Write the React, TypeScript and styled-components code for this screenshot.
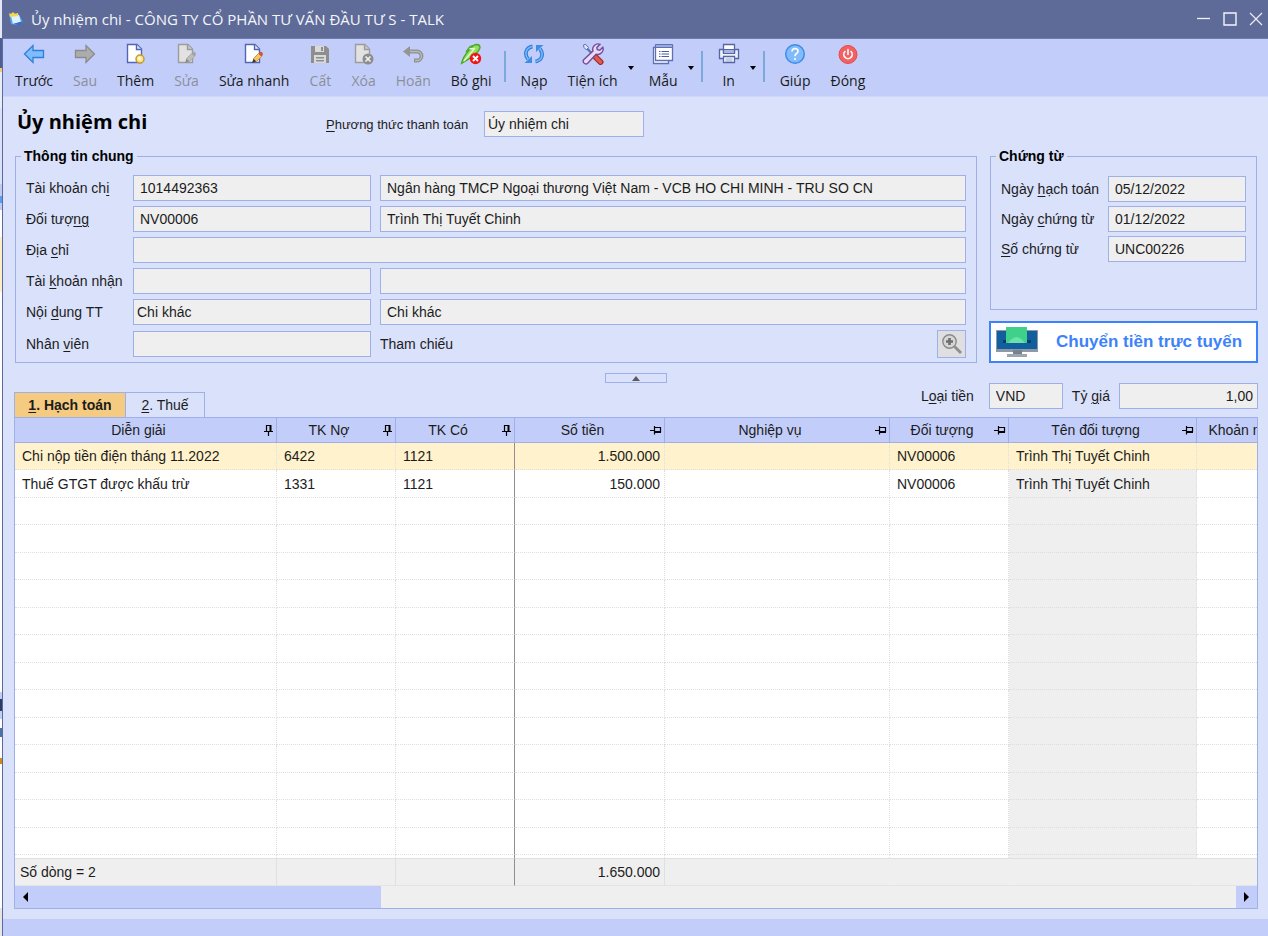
import React from "react";
import styled, { createGlobalStyle, css } from "styled-components";

const c = {
  title: "#5e6b98",
  bar: "#c2cef9",
  body: "#dae1fb",
  line: "#9fb0e8",
  field: "#efefef",
  blue: "#3c82fb",
};

const uiFont = `"Open Sans", "Noto Sans", sans-serif`;
const formFont = `"Liberation Sans", Arial, sans-serif`;

const GlobalStyle = createGlobalStyle`
  *, *::before, *::after { box-sizing: border-box; }
  body { margin: 0; background: ${c.body}; font: 14px/18px ${formFont}; color: #1c1c1c; }
  button, input { font: inherit; color: inherit; }
  u { text-decoration-thickness: 1px; text-underline-offset: 2px; }
`;

/* ---------- window frame ---------- */

const Desktop = styled.div`
  display: flex;
  min-height: 100vh;
`;

const Behind = styled.div`
  flex: none;
  width: 3px;
  border-right: 1px solid #5d6a9c;
  background: linear-gradient(
    #e3e8f6 0 38px, #4f5d90 38px 68px, #f3c77c 68px 72px, #e9edf8 72px 108px,
    #dbe2f8 108px 184px, #c0cbf0 184px 196px, #5b9cf0 196px 203px, #c0cbf0 203px 210px,
    #fff 210px 237px, #fdf0c6 237px 292px, #fff 292px 692px, #c0cdf6 692px 699px,
    #2c3a66 699px 711px, #c0cdf6 711px 719px, #fff 719px 728px, #4a74a8 728px 737px,
    #fff 737px 758px, #d08a1c 758px 764px, #fff 764px 908px, #e6e6e6 908px
  );
`;

const Window = styled.div`
  flex: 1;
  min-width: 0;
  display: flex;
  flex-direction: column;
  background: ${c.body};
`;

const TitleBar = styled.header`
  display: flex;
  align-items: center;
  gap: 7px;
  height: 39px;
  padding: 0 5px;
  background: ${c.title};
  border-bottom: 1px solid #6f7cb0;
  color: #f4f5fa;
  font: 15px/20px ${uiFont};
`;

const TitleText = styled.span`
  flex: 1;
`;

const CaptionButtons = styled.div`
  display: flex;
  gap: 12px;
`;

const PlainButton = styled.button`
  display: flex;
  padding: 0;
  border: 0;
  background: none;
`;

/* ---------- toolbar ---------- */

const ToolBar = styled.nav`
  display: flex;
  height: 58px;
  padding-left: 2px;
  background: ${c.bar};
  border-bottom: 1px solid #cfd8fb;
`;

const Tool = styled.button`
  display: flex;
  flex-direction: column;
  align-items: center;
  gap: 6px;
  padding: 4px 10px 0;
  border: 0;
  background: none;
  color: #1a1a1a;
  font: 14px/20px ${uiFont};
  white-space: nowrap;
  &:disabled { color: #8b8e99; }
`;

const Caret = styled.button`
  width: 11px;
  padding: 0;
  border: 0;
  background: none;
  &::before {
    content: "";
    display: block;
    width: 6px;
    border: 3px solid transparent;
    border-top: 4px solid #000;
    border-bottom: 0;
  }
`;

const ToolDivider = styled.span`
  width: 2px;
  height: 31px;
  margin: 12px 5px 0 2px;
  background: #7ca9dc;
`;

/* ---------- form ---------- */

const Content = styled.main`
  flex: 1;
  display: flex;
  flex-direction: column;
  padding: 14px 10px 10px 11px;
`;

const HeadRow = styled.div`
  display: flex;
  align-items: flex-start;
`;

const Heading = styled.h1`
  width: 312px;
  margin: 0;
  padding: 0 3px;
  font: bold 20px/22px ${uiFont};
  color: #000;
`;

const HeadLabel = styled.label`
  width: 158px;
  font-size: 13px;
  line-height: 28px;
`;

const Field = styled.input<{ $snug?: boolean; $end?: boolean; $w?: number }>`
  ${(p) => (p.$w ? css`width: ${p.$w}px;` : css`width: 100%; min-width: 0;`)}
  height: 26px;
  padding: 0 ${(p) => (p.$end ? 4 : 6)}px 0 ${(p) => (p.$snug ? 3 : 6)}px;
  border: 1px solid ${c.line};
  border-radius: 0;
  background: ${c.field};
  text-align: ${(p) => (p.$end ? "right" : "left")};
`;

const Panels = styled.div`
  display: grid;
  grid-template-columns: 1fr 269px;
  gap: 12px;
  margin-top: 9px;
`;

const Side = styled.div`
  display: flex;
  flex-direction: column;
  justify-content: space-between;
`;

const Group = styled.fieldset`
  min-width: 0;
  margin: 0 0 0 1px;
  padding: 11px 10px 5px;
  border: 1px solid ${c.line};
`;

const SideGroup = styled(Group)`
  margin: 0 1px;
  padding-top: 12px;
  padding-bottom: 47px;
`;

const Legend = styled.legend`
  margin-left: -5px;
  padding: 0 3px;
  font-weight: bold;
  line-height: 16px;
  color: #000;
`;

const InfoGrid = styled.div`
  display: grid;
  grid-template-columns: 98px 238px 1fr;
  gap: 5px 9px;
  align-items: center;
  label { white-space: nowrap; }
`;

const Wide = styled.div`
  grid-column: 2 / 4;
`;

const RefCell = styled.div`
  display: flex;
  align-items: center;
  justify-content: space-between;
  height: 27px;
`;

const LookupButton = styled.button`
  display: grid;
  place-items: center;
  width: 29px;
  height: 28px;
  padding: 0;
  border: 1px solid ${c.line};
  background: #dfdfe1;
`;

const DocGrid = styled.div`
  display: grid;
  grid-template-columns: 98px 1fr;
  gap: 4px 9px;
  align-items: center;
  label { white-space: nowrap; }
`;

const TransferButton = styled.button`
  display: flex;
  align-items: center;
  gap: 18px;
  height: 42px;
  padding: 0 5px;
  border: 2px solid ${c.blue};
  background: #fff;
  color: ${c.blue};
  font-weight: bold;
  font-size: 17px;
  white-space: nowrap;
  svg { flex: none; }
`;

const Collapse = styled.button`
  display: grid;
  place-items: center;
  align-self: center;
  width: 62px;
  height: 10px;
  margin-top: 10px;
  padding: 0;
  border: 1px solid ${c.line};
  background: none;
  &::before {
    content: "";
    border: 4px solid transparent;
    border-bottom: 5px solid #5b5b5b;
    border-top: 0;
  }
`;

/* ---------- detail grid ---------- */

const TabRow = styled.div`
  display: flex;
  align-items: flex-end;
  height: 34px;
`;

const Tab = styled.button<{ $active?: boolean }>`
  width: ${(p) => (p.$active ? 112 : 79)}px;
  height: 25px;
  padding: 0;
  border: 1px solid ${c.line};
  border-bottom: 0;
  border-left-width: ${(p) => (p.$active ? 1 : 0)}px;
  background: ${(p) => (p.$active ? "#f5cb81" : "none")};
  font-weight: ${(p) => (p.$active ? "bold" : "normal")};
`;

const Currency = styled.div`
  display: flex;
  align-items: center;
  gap: 9px;
  margin-left: auto;
  align-self: flex-start;
  white-space: nowrap;
  label:first-child { margin-right: 6px; }
`;

const GridPanel = styled.section`
  flex: 1;
  display: flex;
  flex-direction: column;
  min-width: 0;
  border: 1px solid ${c.line};
  background: #fff;
`;

const GridScroll = styled.div`
  flex: 1;
  overflow: hidden;
  display: grid;
`;

const Table = styled.table`
  width: 1314px;
  table-layout: fixed;
  border-collapse: separate;
  border-spacing: 0;
`;

const Th = styled.th`
  height: 25px;
  padding: 0;
  border-right: 1px solid ${c.line};
  border-bottom: 1px solid ${c.line};
  background: ${c.bar};
  font-weight: normal;
`;

const ThInner = styled.div`
  display: flex;
  align-items: center;
  padding-right: 2px;
  span { flex: 1; text-align: center; white-space: nowrap; }
`;

const Tr = styled.tr<{ $selected?: boolean }>`
  height: 27px;
  background: ${(p) => (p.$selected ? "#fff2cc" : "#fff")};
  &:nth-child(even) { height: 28px; }
  &:last-child { height: 3px; }
  &:last-child td { border-bottom: 0; }
`;

const Td = styled.td<{ $num?: boolean; $frozen?: boolean; $grey?: boolean }>`
  padding: 0 ${(p) => (p.$num ? 4 : 6)}px 0 7px;
  border-bottom: 1px dotted #dedede;
  border-right: 1px ${(p) => (p.$frozen ? "solid #8f8f8f" : "dotted #dedede")};
  text-align: ${(p) => (p.$num ? "right" : "left")};
  white-space: nowrap;
  ${(p) => p.$grey && css`background: #efefef;`}
`;

const FootTd = styled.td<{ $num?: boolean; $frozen?: boolean; $open?: boolean }>`
  height: 28px;
  padding: 0 4px 0 5px;
  background: ${c.field};
  border-top: 1px solid #e0e0e0;
  border-bottom: 1px solid #e4e4e4;
  border-right: 1px solid ${(p) => (p.$frozen ? "#8f8f8f" : p.$open ? c.field : "#e0e0e0")};
  text-align: ${(p) => (p.$num ? "right" : "left")};
`;

const ScrollBar = styled.div`
  display: flex;
  justify-content: space-between;
  height: 22px;
  background: ${c.field};
`;

const Thumb = styled.div`
  display: flex;
  width: 366px;
  background: ${c.bar};
`;

const Arrow = styled.button<{ $right?: boolean }>`
  display: grid;
  place-items: center;
  width: 21px;
  padding: 0;
  border: 0;
  background: ${c.bar};
  &::before {
    content: "";
    border: 5px solid transparent;
    ${(p) =>
      p.$right
        ? css`border-left-color: #000; border-right: 0;`
        : css`border-right-color: #000; border-left: 0;`}
  }
`;

const StatusBar = styled.footer`
  height: 17px;
  background: ${c.bar};
`;

/* ---------- icons ---------- */

const Svg = ({ w = 22, h = 22, children }: { w?: number; h?: number; children: React.ReactNode }) => (
  <svg width={w} height={h} viewBox={`0 0 ${w} ${h}`} fill="none" aria-hidden="true">
    {children}
  </svg>
);

const ArrowIcon = ({ right, fill, stroke }: { right?: boolean; fill: string; stroke: string }) => (
  <Svg>
    <path
      d={right ? "M20.500 11 12 2.500v5H1.500v7H12v5z" : "M1.500 11 10 2.500v5h10.500v7H10v5z"}
      fill={fill}
      stroke={stroke}
      strokeWidth="1.300"
    />
  </Svg>
);

const Page = ({ grey }: { grey?: boolean }) => (
  <>
    <path d="M2.500 1.500h9.500l4.500 4.500v13.500h-14z" fill={grey ? "#e2e2e2" : "#fff"} stroke={grey ? "#9c9c9c" : "#5166b4"} strokeWidth="1.400" />
    <path d="M11.500 1.500v5h5" fill={grey ? "#c9c9c9" : "#dfe5fa"} stroke={grey ? "#9c9c9c" : "#5166b4"} strokeWidth="1.400" />
  </>
);

const AddIcon = () => (
  <Svg>
    <Page />
    <circle cx="15" cy="16" r="4" fill="#fbe58a" stroke="#c89a2c" strokeWidth="1.500" />
    <circle cx="14.500" cy="15.500" r="1.700" fill="#fff8d2" />
  </Svg>
);

const EditIcon = ({ grey }: { grey?: boolean }) => (
  <Svg>
    <Page grey={grey} />
    <path d="m9 20 1.500-4.500 3 3z" fill={grey ? "#8c8c8c" : "#3f3a3a"} />
    <path d="m10.500 15.500 5-5 3 3-5 5z" fill={grey ? "#bdbdbd" : "#f3c75a"} stroke={grey ? "#a3a3a3" : "#c08830"} strokeWidth=".8" />
    <path d="m15.500 10.500 1.300-1.300q1.500-.8 2.500.3t.5 2.500L18.500 13.500z" fill={grey ? "#a5a5a5" : "#d9503e"} />
  </Svg>
);

const SaveIcon = () => (
  <Svg>
    <path d="M2 3h15l3 3v14H2z" fill="#8e8e8e" />
    <path d="M6 3h9v6H6zM5 12h12v8H5z" fill="#dadada" />
    <path d="M12 4h2v4h-2zM7 14h8v1.500H7zM7 17h8v1.500H7z" fill="#8e8e8e" />
  </Svg>
);

const DeleteIcon = () => (
  <Svg>
    <Page grey />
    <circle cx="15" cy="16" r="5.500" fill="#8d8d8d" />
    <path d="m12.500 13.500 5 5m0-5-5 5" stroke="#f0f0f0" strokeWidth="1.700" />
  </Svg>
);

const UndoIcon = () => (
  <Svg>
    <path d="M7 8.500h8a4.500 4.500 0 0 1 0 9h-3" stroke="#8f8f8f" strokeWidth="3.800" />
    <path d="M7 8.500h8a4.500 4.500 0 0 1 0 9h-2" stroke="#b9b9b9" strokeWidth="1.400" />
    <path d="M8 3v11L1 8.500z" fill="#949494" />
  </Svg>
);

const UnpostIcon = () => (
  <Svg>
    <path d="M1.500 20.500Q3 14 9 7q4-5.500 8-5.500 3 .2 3 3-1 4-7 8.500-5 4-11.500 7.500z" fill="#8fe05a" stroke="#4ba62c" strokeWidth="1.300" />
    <path d="M4 18 15 5M9 5.500l6 .5" stroke="#e4fbd2" strokeWidth="1.300" />
    <path d="m6 9 4-5.500 3-1" stroke="#4ba62c" strokeWidth="1.300" />
    <circle cx="15.500" cy="15.500" r="5.700" fill="#ee1616" />
    <path d="m13 13 5 5m0-5-5 5" stroke="#fff" strokeWidth="1.900" />
  </Svg>
);

const ReloadIcon = () => (
  <Svg>
    <path d="M9.500 3.500C3 4.500 1 11 5 16" stroke="#2f7fdc" strokeWidth="3.800" />
    <path d="M9.500 3.500C3 4.500 1 11 5 16" stroke="#7db6f7" strokeWidth="1.500" />
    <path d="M1.500 20H9v-7z" fill="#3f8ce6" />
    <path d="M12.500 18.500C19 17.500 21 11 17 6" stroke="#2f7fdc" strokeWidth="3.800" />
    <path d="M12.500 18.500C19 17.500 21 11 17 6" stroke="#7db6f7" strokeWidth="1.500" />
    <path d="M20.500 2H13v7z" fill="#3f8ce6" />
  </Svg>
);

const ToolsIcon = () => (
  <Svg>
    <path d="m3.500 4 9.500 9.500" stroke="#5b6fae" strokeWidth="2.200" />
    <path d="m1.500 2 2-.8L6.500 4.500 4.500 7 2 4.500z" fill="#dfe7fb" stroke="#5b6fae" />
    <path d="m14 14.500 4.500 4.500" stroke="#a52828" strokeWidth="6" strokeLinecap="round" />
    <path d="m14 14.500 4.500 4.500" stroke="#e05a50" strokeWidth="3.600" strokeLinecap="round" />
    <path d="M18 1.300a5.400 5.400 0 0 0-7 6.800L1.900 16.500a2.700 2.700 0 0 0 3.800 3.800l8.300-9.100a5.400 5.400 0 0 0 6.800-7l-3 3-2.500-.5-.5-2.300z" fill="#e5ddf7" stroke="#77489c" strokeWidth="1.400" />
  </Svg>
);

const TemplateIcon = () => (
  <Svg>
    <path d="M1.500 4.500h15v16h-15z" fill="#fff" stroke="#5f70b4" strokeWidth="1.300" />
    <path d="M3.500 2.500h17v15h-17z" fill="#fff" stroke="#5f70b4" strokeWidth="1.300" />
    <path d="M3.500 1.500h17v3h-17z" fill="#9aa9da" stroke="#5f70b4" />
    <path d="M7 8.500h1.500m1 0H17M7 11h1.500m1 0H17M7 13.500h1.500m1 0H17" stroke="#4a5da6" strokeWidth="1.200" />
  </Svg>
);

const PrintIcon = () => (
  <Svg>
    <path d="M5.500 1.500h11v6h-11z" fill="#fff" stroke="#5565a8" strokeWidth="1.300" />
    <path d="M1.500 6.500h4v3h11v-3h4v9h-19z" fill="#edf0fb" stroke="#5565a8" strokeWidth="1.300" />
    <path d="M5.500 6.500h11v4h-11z" fill="#a9b6e2" stroke="#5565a8" strokeWidth="1.200" />
    <path d="M5.500 13.500h11v6h-11z" fill="#fff" stroke="#5565a8" strokeWidth="1.300" />
    <path d="M7.500 16h7m-7 2h7" stroke="#8d9bd0" />
  </Svg>
);

const HelpIcon = () => (
  <Svg>
    <circle cx="11" cy="11" r="9.300" fill="#82bbfb" stroke="#3c8de8" strokeWidth="1.500" />
    <path d="M8 8.500q.2-3 3-3 3 .2 3 2.700 0 1.500-1.700 2.500-1.300.8-1.300 2.600" stroke="#fff" strokeWidth="1.600" />
    <circle cx="11" cy="16" r="1.100" fill="#fff" />
  </Svg>
);

const PowerIcon = () => (
  <Svg>
    <circle cx="11" cy="11.500" r="9" fill="#f26062" stroke="#e8484c" />
    <path d="M8 8.500a4.200 4.200 0 1 0 6 0M11 6.500v5" stroke="#fff" strokeWidth="1.600" strokeLinecap="round" />
  </Svg>
);

const AppIcon = () => (
  <Svg w={16} h={16}>
    <path d="m1 3 9-1 5 9-7 3-5-1z" fill="#4fa8f0" />
    <path d="m3 5 8-1 2 7-8 2z" fill="#dff1ff" />
    <path d="m1 2 2 1 2-2 2 2 3-1v3L2 6z" fill="#f7d64c" />
    <path d="m5 13 10-3-3 4z" fill="#2f6fd8" />
  </Svg>
);

const MinIcon = () => (
  <Svg w={14} h={14}><path d="M0 6.500h13" stroke="#f0f2f8" strokeWidth="1.300" /></Svg>
);
const MaxIcon = () => (
  <Svg w={14} h={14}><path d="M1 1h12v12H1z" stroke="#f4f5fa" strokeWidth="1.400" /></Svg>
);
const CloseIcon = () => (
  <Svg w={14} h={14}><path d="m1 1 12 12m0-12L1 13" stroke="#eceef6" strokeWidth="1.200" /></Svg>
);

const LookupIcon = () => (
  <Svg>
    <path d="m13.500 13.500 6.500 6.500" stroke="#8e8e8e" strokeWidth="2.800" />
    <circle cx="8.500" cy="8.500" r="6.700" fill="#d6d6d6" stroke="#8a8a8a" strokeWidth="1.400" />
    <path d="M8.500 5v7M5 8.500h7" stroke="#6f6f6f" strokeWidth="2.600" />
  </Svg>
);

const MonitorIcon = () => (
  <Svg w={42} h={32}>
    <path d="M0 4h42v22H0z" fill="#8d99a5" />
    <path d="M1 5h40v18H1z" fill="#125f9f" />
    <path d="M17 24h9v5h-9z" fill="#76828e" />
    <path d="M11 28h20v3H11z" fill="#9ba6b0" />
    <path d="M7 14h28v3H7z" fill="#0b3c69" />
    <path d="M10 1h21v16H10z" fill="#3fd08a" />
    <path d="M12 17q8.500-12 17 0z" fill="#69e2aa" />
  </Svg>
);

const PinDown = () => (
  <Svg w={12} h={14}>
    <path d="M4.500 8V2.500H9M2 8.500h9M6.500 9v4" stroke="#000" strokeWidth="1.200" />
    <path d="M8.500 2v6" stroke="#000" strokeWidth="2" />
  </Svg>
);
const PinLeft = () => (
  <Svg w={12} h={14}>
    <path d="M5 4.500h5.500V9M4.500 3v8.500M0 7.500h4.500" stroke="#000" strokeWidth="1.200" />
    <path d="M5 9h6" stroke="#000" strokeWidth="2" />
  </Svg>
);

/* ---------- data ---------- */

type ToolItem = { text: string; icon: React.ReactNode; off?: boolean; menu?: boolean; end?: boolean };

const tools: ToolItem[] = [
  { text: "Trước", icon: <ArrowIcon fill="#7fbcfb" stroke="#2f7fd8" /> },
  { text: "Sau", icon: <ArrowIcon right fill="#acacac" stroke="#8c8c8c" />, off: true },
  { text: "Thêm", icon: <AddIcon /> },
  { text: "Sửa", icon: <EditIcon grey />, off: true },
  { text: "Sửa nhanh", icon: <EditIcon /> },
  { text: "Cất", icon: <SaveIcon />, off: true },
  { text: "Xóa", icon: <DeleteIcon />, off: true },
  { text: "Hoãn", icon: <UndoIcon />, off: true },
  { text: "Bỏ ghi", icon: <UnpostIcon />, end: true },
  { text: "Nạp", icon: <ReloadIcon /> },
  { text: "Tiện ích", icon: <ToolsIcon />, menu: true },
  { text: "Mẫu", icon: <TemplateIcon />, menu: true, end: true },
  { text: "In", icon: <PrintIcon />, menu: true, end: true },
  { text: "Giúp", icon: <HelpIcon /> },
  { text: "Đóng", icon: <PowerIcon /> },
];

const columns = [
  { title: "Diễn giải", width: 262, pinned: true },
  { title: "TK Nợ", width: 119, pinned: true },
  { title: "TK Có", width: 119, pinned: true },
  { title: "Số tiền", width: 150 },
  { title: "Nghiệp vụ", width: 225 },
  { title: "Đối tượng", width: 119 },
  { title: "Tên đối tượng", width: 188 },
  { title: "Khoản mục CP", width: 132 },
];

const entries = [
  ["Chi nộp tiền điện tháng 11.2022", "6422", "1121", "1.500.000", "", "NV00006", "Trình Thị Tuyết Chinh", ""],
  ["Thuế GTGT được khấu trừ", "1331", "1121", "150.000", "", "NV00006", "Trình Thị Tuyết Chinh", ""],
];
const blank = columns.map(() => "");
const rows = [...entries, ...Array.from({ length: 14 }, () => blank)];
const totals = ["Số dòng = 2", "", "", "1.650.000", "", "", "", ""];

export default function App() {
  return (
    <Desktop>
      <GlobalStyle />
      <Behind />
      <Window>
        <TitleBar>
          <AppIcon />
          <TitleText>Ủy nhiệm chi - CÔNG TY CỔ PHẦN TƯ VẤN ĐẦU TƯ S - TALK</TitleText>
          <CaptionButtons>
            <PlainButton aria-label="Thu nhỏ"><MinIcon /></PlainButton>
            <PlainButton aria-label="Phóng to"><MaxIcon /></PlainButton>
            <PlainButton aria-label="Đóng cửa sổ"><CloseIcon /></PlainButton>
          </CaptionButtons>
        </TitleBar>

        <ToolBar>
          {tools.map((t) => (
            <React.Fragment key={t.text}>
              <Tool disabled={t.off}>
                {t.icon}
                {t.text}
              </Tool>
              {t.menu && <Caret aria-label={`Mở ${t.text}`} />}
              {t.end && <ToolDivider />}
            </React.Fragment>
          ))}
        </ToolBar>

        <Content>
          <HeadRow>
            <Heading>Ủy nhiệm chi</Heading>
            <HeadLabel htmlFor="method"><u>P</u>hương thức thanh toán</HeadLabel>
            <Field id="method" $w={160} $snug defaultValue="Ủy nhiệm chi" />
          </HeadRow>

          <Panels>
            <Group>
              <Legend>Thông tin chung</Legend>
              <InfoGrid>
                <label htmlFor="acc">Tài khoản ch<u>i</u></label>
                <Field id="acc" defaultValue="1014492363" />
                <Field aria-label="Ngân hàng chi" defaultValue="Ngân hàng TMCP Ngoại thương Việt Nam - VCB HO CHI MINH - TRU SO CN" />
                <label htmlFor="obj">Đối tượ<u>ng</u></label>
                <Field id="obj" defaultValue="NV00006" />
                <Field aria-label="Tên đối tượng" defaultValue="Trình Thị Tuyết Chinh" />
                <label htmlFor="addr">Địa <u>c</u>hỉ</label>
                <Wide><Field id="addr" /></Wide>
                <label htmlFor="recv">Tài <u>k</u>hoản nhận</label>
                <Field id="recv" />
                <Field aria-label="Ngân hàng nhận" />
                <label htmlFor="content">Nội <u>d</u>ung TT</label>
                <Field id="content" $snug defaultValue="Chi khác" />
                <Field aria-label="Diễn giải nội dung" defaultValue="Chi khác" />
                <label htmlFor="staff">Nhân <u>v</u>iên</label>
                <Field id="staff" />
                <RefCell>
                  <label htmlFor="ref">Tham chiếu</label>
                  <LookupButton id="ref"><LookupIcon /></LookupButton>
                </RefCell>
              </InfoGrid>
            </Group>

            <Side>
              <SideGroup>
                <Legend>Chứng từ</Legend>
                <DocGrid>
                  <label htmlFor="posted">Ngày <u>h</u>ạch toán</label>
                  <Field id="posted" defaultValue="05/12/2022" />
                  <label htmlFor="dated">Ngày <u>c</u>hứng từ</label>
                  <Field id="dated" defaultValue="01/12/2022" />
                  <label htmlFor="docno"><u>S</u>ố chứng từ</label>
                  <Field id="docno" defaultValue="UNC00226" />
                </DocGrid>
              </SideGroup>
              <TransferButton>
                <MonitorIcon />
                Chuyển tiền trực tuyến
              </TransferButton>
            </Side>
          </Panels>

          <Collapse aria-label="Thu gọn" />

          <TabRow>
            <Tab $active><u>1</u>. Hạch toán</Tab>
            <Tab><u>2</u>. Thuế</Tab>
            <Currency>
              <label htmlFor="cur">L<u>o</u>ại tiền</label>
              <Field id="cur" $w={74} defaultValue="VND" />
              <label htmlFor="rate">Tỷ <u>g</u>iá</label>
              <Field id="rate" $w={139} $end defaultValue="1,00" />
            </Currency>
          </TabRow>

          <GridPanel>
            <GridScroll>
              <Table>
                <colgroup>
                  {columns.map((col) => <col key={col.title} style={{ width: col.width }} />)}
                </colgroup>
                <thead>
                  <tr>
                    {columns.map((col) => (
                      <Th key={col.title}>
                        <ThInner>
                          <span>{col.title}</span>
                          {col.pinned ? <PinDown /> : <PinLeft />}
                        </ThInner>
                      </Th>
                    ))}
                  </tr>
                </thead>
                <tbody>
                  {rows.map((row, i) => (
                    <Tr key={i} $selected={i === 0}>
                      {row.map((cell, j) => (
                        <Td key={j} $num={j === 3} $frozen={j === 2} $grey={j === 6 && i > 0}>{cell}</Td>
                      ))}
                    </Tr>
                  ))}
                </tbody>
                <tfoot>
                  <tr>
                    {totals.map((cell, j) => (
                      <FootTd key={j} $num={j === 3} $frozen={j === 2} $open={j > 3}>{cell}</FootTd>
                    ))}
                  </tr>
                </tfoot>
              </Table>
            </GridScroll>
            <ScrollBar>
              <Thumb><Arrow aria-label="Cuộn trái" /></Thumb>
              <Arrow $right aria-label="Cuộn phải" />
            </ScrollBar>
          </GridPanel>
        </Content>
        <StatusBar />
      </Window>
    </Desktop>
  );
}
